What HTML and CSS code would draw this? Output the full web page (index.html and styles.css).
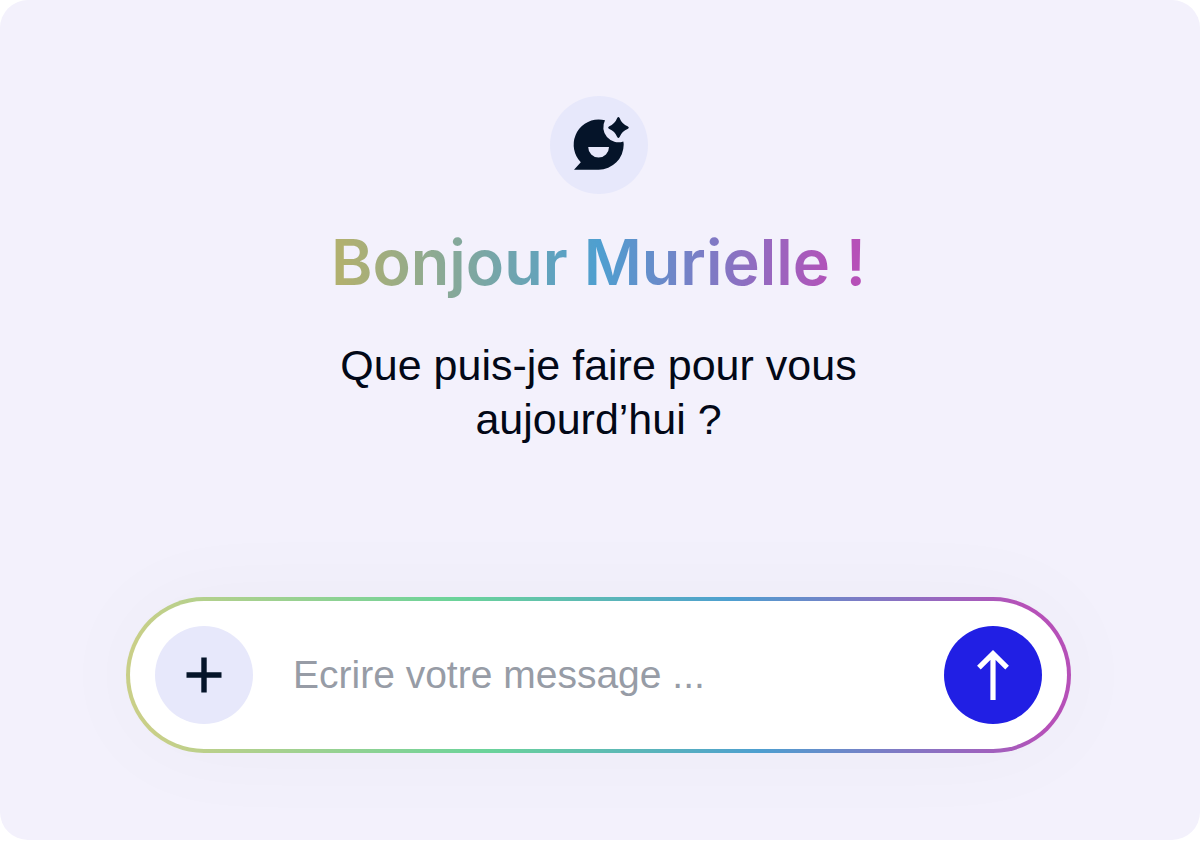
FILE: index.html
```html
<!DOCTYPE html>
<html lang="fr">
<head>
    <meta charset="UTF-8">
    <meta name="viewport" content="width=device-width, initial-scale=1.0">
    <title>Assistant</title>
    <link rel="stylesheet" href="styles.css">
</head>
<body>

<main class="card">
    <div class="avatar">
        <svg viewBox="0 0 98 98" aria-hidden="true">
            <!-- speech bubble with smile -->
            <path fill="#051429" fill-rule="evenodd" d="M24 73.7 L30.8 66.2 A25.1 25.1 0 0 1 48.6 23.6 Q52 23.6 55 24.3 A15 15 0 0 0 73.3 45.4 Q73.7 47 73.7 48.6 A25.1 25.1 0 0 1 48.6 73.7 Z M38.2 51 A10.4 10.6 0 0 0 59 51 Z"/>
            <!-- sparkle -->
            <path fill="#051429" d="M67.2 22 Q68.4 20.2 69.6 22 Q71.6 27.8 78 30.4 Q79.8 31.5 78 32.7 Q71.8 35.2 69.6 41 Q68.4 42.8 67.2 41 Q65 35.2 58.9 32.7 Q57.2 31.5 58.9 30.4 Q65 27.8 67.2 22 Z"/>
        </svg>
    </div>

    <h1 class="greeting">Bonjour Murielle !</h1>
    <p class="question">Que puis-je faire pour vous aujourd’hui ?</p>

    <form class="composer">
        <button type="button" class="round-btn add-btn" aria-label="Ajouter">
            <svg viewBox="0 0 98 98" aria-hidden="true">
                <path d="M49 31.5v35M31.5 49h35" fill="none" stroke="#051429" stroke-width="5.4"/>
            </svg>
        </button>
        <input type="text" class="message" placeholder="Ecrire votre message ..." aria-label="Message">
        <button type="submit" class="round-btn send-btn" aria-label="Envoyer">
            <svg viewBox="0 0 98 98" aria-hidden="true">
                <path d="M49 74V28M34.9 41.6 49 27.6 63.1 41.6" fill="none" stroke="#fff" stroke-width="5.2"/>
            </svg>
        </button>
    </form>
</main>

</body>
</html>
```
FILE: styles.css
```css
* {
    margin: 0;
    padding: 0;
    box-sizing: border-box;
}

body {
    font-family: 'Liberation Sans', Arial, sans-serif;
    background-color: #fff;
    color: #020817;
}

.card {
    display: flex;
    flex-direction: column;
    align-items: center;
    padding: 96px 129px 87px 126px;
    background-color: #f3f1fc;
    border-radius: 28px;
}

.avatar {
    width: 98px;
    height: 98px;
    border-radius: 50%;
    background-color: #e7e8fb;
}

.avatar svg,
.round-btn svg {
    display: block;
    width: 100%;
    height: 100%;
}

.greeting {
    margin-top: 28px;
    font-family: Inter, sans-serif;
    font-size: 63px;
    font-weight: 600;
    line-height: 80px;
    text-align: center;
    background: linear-gradient(90deg, #b1b06f 2%, #4e9fd0 50%, #b650b8 95%);
    -webkit-background-clip: text;
    background-clip: text;
    color: transparent;
}

.question {
    max-width: 640px;
    margin-top: 36px;
    font-size: 43px;
    line-height: 54px;
    text-align: center;
}

.composer {
    display: flex;
    align-items: center;
    gap: 40px;
    width: 100%;
    margin-top: 151px;
    padding: 25px;
    border: 4px solid transparent;
    border-radius: 78px;
    background:
        linear-gradient(#fff, #fff) padding-box,
        linear-gradient(79deg, #c9cf88 3%, #6bd39a 37%, #4e9fd0 65%, #b650b8 95%) border-box;
    box-shadow: 0 0 96px rgba(5, 20, 41, 0.03);
}

.round-btn {
    flex: none;
    width: 98px;
    height: 98px;
    border: none;
    border-radius: 50%;
    cursor: pointer;
}

.add-btn {
    background-color: #e7e8fb;
}

.send-btn {
    background-color: #211fe4;
}

.message {
    flex: 1;
    min-width: 0;
    border: none;
    outline: none;
    background: none;
    color: #020817;
    font-family: inherit;
    font-size: 39px;
    line-height: 54px;
}

.message::placeholder {
    color: #979ca6;
    opacity: 1;
}

@media (max-width: 700px) {
    .card {
        padding: 48px 20px;
    }

    .greeting {
        font-size: 42px;
        line-height: 54px;
    }

    .question {
        font-size: 28px;
        line-height: 36px;
    }

    .composer {
        gap: 16px;
        margin-top: 64px;
        padding: 16px;
    }

    .round-btn {
        width: 56px;
        height: 56px;
    }

    .message {
        font-size: 20px;
    }
}
```
